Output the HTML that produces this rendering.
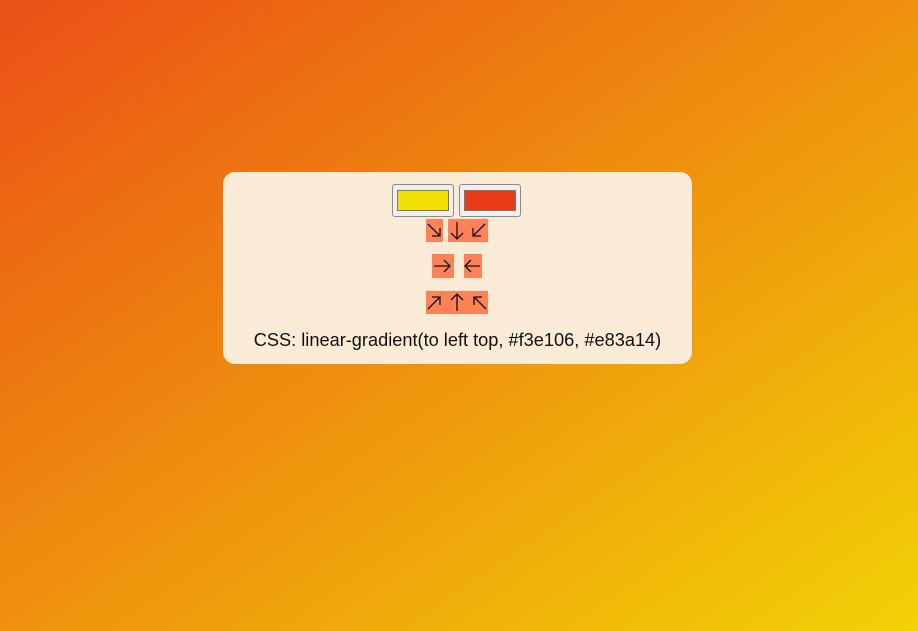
<!DOCTYPE html>
<html><head><style>
html,body{margin:0;width:918px;height:631px;overflow:hidden}
body{background:linear-gradient(to left top,#f2d205,#eb5016);position:relative;font-family:"Liberation Sans",sans-serif}
.p{position:absolute;left:223px;top:172px;width:469px;height:192px;background:#faebd7;border-radius:12px}
.c{position:absolute;top:184px;width:60px;height:31px;border:1px solid #8a8a8a;border-radius:3px;background:#efefef}
.c i{position:absolute;left:4px;top:5px;right:4px;bottom:5px;border:1px solid #777}
.b{position:absolute;background:#ff8157}
svg{position:absolute;overflow:visible}
svg path{stroke:#111;stroke-width:1.3;fill:none}
.t{position:absolute;left:223px;width:469px;top:330px;text-align:center;font-size:18.2px;color:#111}
</style></head><body>
<div class="p"></div>
<div class="c" style="left:392px"><i style="background:#f3e106"></i></div>
<div class="c" style="left:459px"><i style="background:#e83a14"></i></div>
<div class="b" style="left:426px;top:219px;width:17px;height:23px"></div>
<div class="b" style="left:448px;top:219px;width:40px;height:23px"></div>
<div class="b" style="left:432px;top:254px;width:22px;height:24px"></div>
<div class="b" style="left:464px;top:254px;width:18px;height:24px"></div>
<div class="b" style="left:426px;top:291px;width:62px;height:23px"></div>
<svg width="918" height="631" style="left:0;top:0">
<path d="M428 224 L440 236 M440 228 V236 H432"/>
<path d="M457 222 V239 M451 233 L457 239 L463 233"/>
<path d="M485 224 L473 236 M473 228 V236 H481"/>
<path d="M434 266 H450 M444 260 L450 266 L444 272"/>
<path d="M480 266 H465 M471 260 L465 266 L471 272"/>
<path d="M428 309 L440 297 M432 297 H440 V305"/>
<path d="M457 311 V294 M451 300 L457 294 L463 300"/>
<path d="M486 309 L474 297 M474 305 V297 H482"/>
</svg>
<div class="t">CSS: linear-gradient(to left top, #f3e106, #e83a14)</div>
</body></html>
